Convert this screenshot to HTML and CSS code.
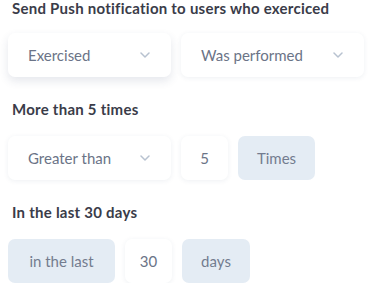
FILE: index.html
```html
<!DOCTYPE html>
<html>
<head>
<meta charset="utf-8">
<link rel="stylesheet" href="styles.css">
</head>
<body>
<div class="page">
  <section class="group">
    <h2 class="title">Send Push notification to users who exerciced</h2>
    <div class="row">
      <div class="field select raised w163"><span>Exercised</span><svg class="chev" viewBox="0 0 10 6"><path d="M1 1l4 4 4-4"/></svg></div>
      <div class="field select w183"><span>Was performed</span><svg class="chev" viewBox="0 0 10 6"><path d="M1 1l4 4 4-4"/></svg></div>
    </div>
  </section>
  <section class="group">
    <h2 class="title">More than 5 times</h2>
    <div class="row">
      <div class="field select w163"><span>Greater than</span><svg class="chev" viewBox="0 0 10 6"><path d="M1 1l4 4 4-4"/></svg></div>
      <div class="field num w47">5</div>
      <div class="field tag w77">Times</div>
    </div>
  </section>
  <section class="group">
    <h2 class="title">In the last 30 days</h2>
    <div class="row">
      <div class="field tag w107">in the last</div>
      <div class="field num w47">30</div>
      <div class="field tag w68">days</div>
    </div>
  </section>
</div>
</body>
</html>
```
FILE: styles.css
```css
html, body {
  margin: 0;
  padding: 0;
  background: #ffffff;
}
.page {
  font-family: Lato, "Liberation Sans", sans-serif;
  margin-top: -2px;
  padding: 0 0 0 8px;
  display: flex;
  flex-direction: column;
  gap: 22px;
}
.group {
  display: flex;
  flex-direction: column;
}
.title {
  margin: 0 0 17px 4px;
  font-size: 15px;
  font-weight: 700;
  line-height: 20px;
  letter-spacing: 0.25px;
  color: #3a3c49;
}
.group:first-child .title {
  margin-bottom: 15px;
}
.row {
  display: flex;
  gap: 10px;
}
.field {
  box-sizing: border-box;
  height: 44px;
  border-radius: 7px;
  display: flex;
  align-items: center;
  font-size: 15px;
  color: #6b7487;
}
.select {
  background: #fff;
  justify-content: space-between;
  padding: 0 21px 0 20px;
  box-shadow: 0 1px 5px rgba(40, 60, 100, 0.08);
}
.raised {
  box-shadow: 0 4px 10px rgba(40, 60, 100, 0.12);
}
.num {
  background: #fff;
  justify-content: center;
  box-shadow: 0 1px 5px rgba(40, 60, 100, 0.08);
}
.tag {
  background: #e4ecf4;
  justify-content: center;
  color: #737c8f;
}
.chev {
  width: 10px;
  height: 6px;
  fill: none;
  stroke: #b8c2d0;
  stroke-width: 1.5;
  stroke-linecap: round;
  stroke-linejoin: round;
}
.w163 { width: 163px; }
.w183 { width: 183px; }
.w47 { width: 47px; }
.w77 { width: 77px; }
.w107 { width: 107px; }
.w68 { width: 68px; }
```
